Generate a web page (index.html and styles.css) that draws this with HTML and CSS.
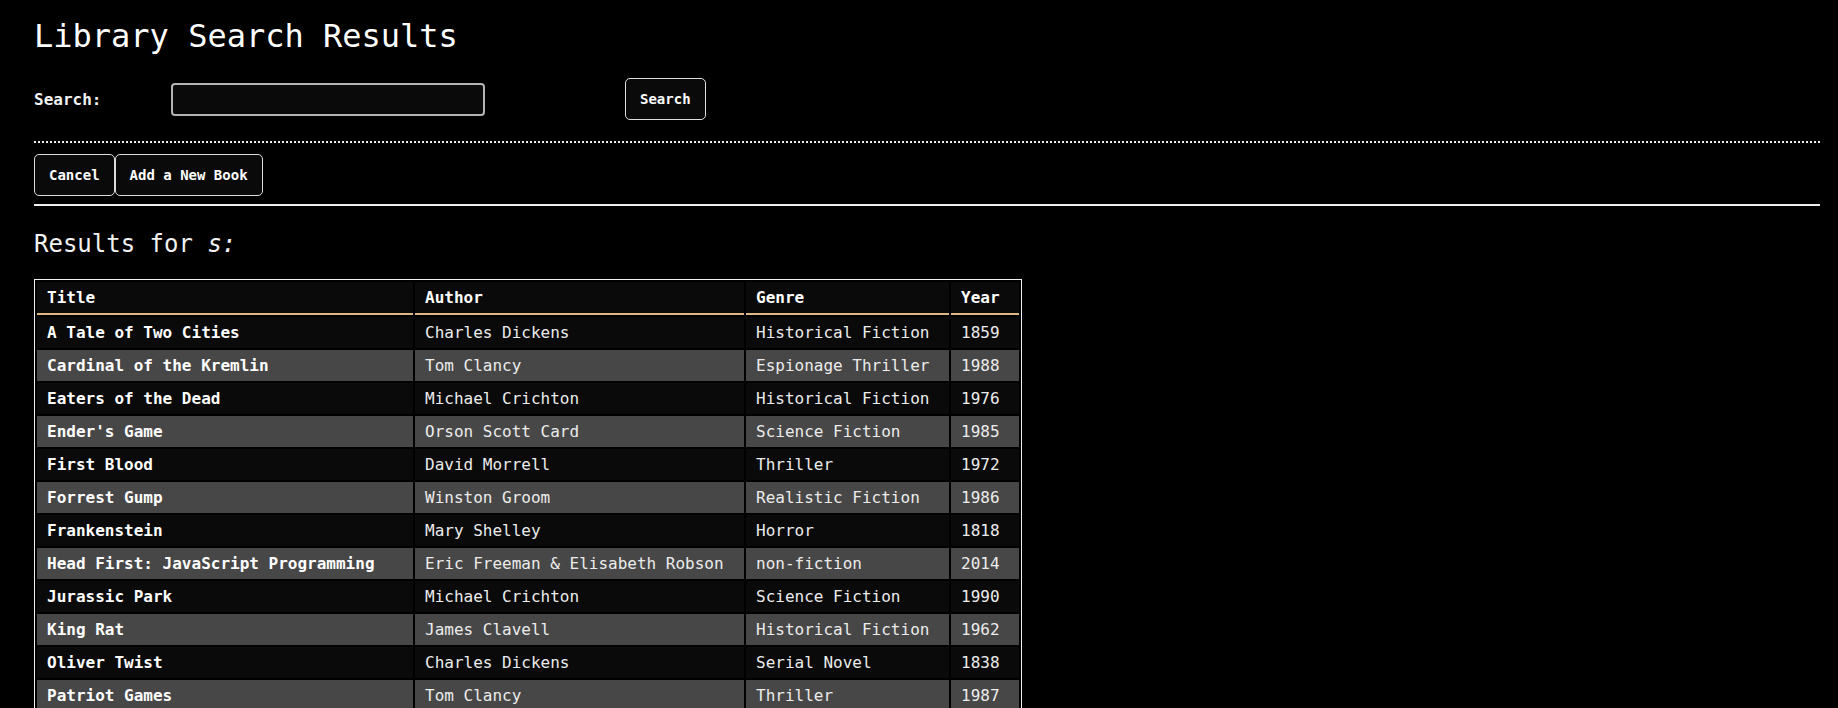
FILE: index.html
```html
<!DOCTYPE html>
<html lang="en">
<head>
<meta charset="utf-8">
<title>Library Search Results</title>
<link rel="stylesheet" href="styles.css">
</head>
<body>
<div class="page">
  <h1 class="title">Library Search Results</h1>
  <form class="search-row">
    <label class="search-label" for="q">Search:</label>
    <input class="search-input" id="q" type="text">
    <button class="btn" type="button">Search</button>
  </form>
  <div class="dotted-rule"></div>
  <div class="actions">
    <button class="btn" type="button">Cancel</button>
    <button class="btn" type="button">Add a New Book</button>
  </div>
  <div class="solid-rule"></div>
  <h2 class="results-heading">Results for <em>s:</em></h2>
  <table class="books">
    <thead>
      <tr>
        <th class="col-title">Title</th>
        <th class="col-author">Author</th>
        <th class="col-genre">Genre</th>
        <th class="col-year">Year</th>
      </tr>
    </thead>
    <tbody>
      <tr><td class="book-title">A Tale of Two Cities</td><td>Charles Dickens</td><td>Historical Fiction</td><td>1859</td></tr>
      <tr><td class="book-title">Cardinal of the Kremlin</td><td>Tom Clancy</td><td>Espionage Thriller</td><td>1988</td></tr>
      <tr><td class="book-title">Eaters of the Dead</td><td>Michael Crichton</td><td>Historical Fiction</td><td>1976</td></tr>
      <tr><td class="book-title">Ender's Game</td><td>Orson Scott Card</td><td>Science Fiction</td><td>1985</td></tr>
      <tr><td class="book-title">First Blood</td><td>David Morrell</td><td>Thriller</td><td>1972</td></tr>
      <tr><td class="book-title">Forrest Gump</td><td>Winston Groom</td><td>Realistic Fiction</td><td>1986</td></tr>
      <tr><td class="book-title">Frankenstein</td><td>Mary Shelley</td><td>Horror</td><td>1818</td></tr>
      <tr><td class="book-title">Head First: JavaScript Programming</td><td>Eric Freeman &amp; Elisabeth Robson</td><td>non-fiction</td><td>2014</td></tr>
      <tr><td class="book-title">Jurassic Park</td><td>Michael Crichton</td><td>Science Fiction</td><td>1990</td></tr>
      <tr><td class="book-title">King Rat</td><td>James Clavell</td><td>Historical Fiction</td><td>1962</td></tr>
      <tr><td class="book-title">Oliver Twist</td><td>Charles Dickens</td><td>Serial Novel</td><td>1838</td></tr>
      <tr><td class="book-title">Patriot Games</td><td>Tom Clancy</td><td>Thriller</td><td>1987</td></tr>
    </tbody>
  </table>
</div>
</body>
</html>
```
FILE: styles.css
```css
html, body {
  margin: 0;
  background: #000;
  color: #f2f2f2;
  font-family: "DejaVu Sans Mono", "Liberation Mono", monospace;
  font-size: 16px;
}

.page {
  padding: 16px 18px 0 34px;
}

.title {
  margin: 0;
  font-size: 32px;
  line-height: 40px;
  font-weight: normal;
  color: #fff;
}

.search-row {
  display: flex;
  align-items: center;
  margin: 22px 0 0 0;
}

.search-label {
  width: 137px;
  font-weight: bold;
  font-size: 16px;
}

.search-input {
  box-sizing: border-box;
  width: 314px;
  height: 33px;
  margin: 0 140px 0 0;
  background: #0a0a0a;
  border: 2px solid #b4b4b4;
  border-radius: 4px;
  color: #fff;
  font-family: inherit;
  font-size: 16px;
  padding: 0 8px;
}

.btn {
  box-sizing: border-box;
  height: 42px;
  padding: 0 14px;
  background: #0a0a0a;
  color: #fff;
  border: 1px solid #dcdcdc;
  border-radius: 5px;
  font-family: inherit;
  font-size: 14px;
  font-weight: bold;
  line-height: 16px;
  cursor: pointer;
}

.dotted-rule {
  margin-top: 21px;
  border-top: 2px dotted #eee;
}

.actions {
  display: flex;
  margin-top: 11px;
}

.solid-rule {
  margin-top: 8px;
  border-top: 2px solid #eee;
}

.results-heading {
  margin: 23px 0 0 0;
  font-size: 24px;
  line-height: 30px;
  font-weight: normal;
}

.results-heading em {
  font-style: italic;
}

.books {
  margin-top: 20px;
  border: 1px solid #f0f0f0;
  border-collapse: separate;
  border-spacing: 2px;
  font-size: 16px;
}

.books th,
.books td {
  padding: 6px 10px;
  line-height: 19px;
  text-align: left;
  white-space: nowrap;
}

.books th {
  background: #0a0a0a;
  font-weight: bold;
  color: #fff;
  border-bottom: 2px solid #deb887;
}

.col-title { width: 356px; }
.col-author { width: 309px; }
.col-genre { width: 183px; }
.col-year { width: 48px; }

.books tbody tr:nth-child(odd) td {
  background: #0a0a0a;
}

.books tbody tr:nth-child(even) td {
  background: #474747;
}

.books td {
  color: #ececec;
}

.books td.book-title {
  font-weight: bold;
  color: #fff;
}
```
